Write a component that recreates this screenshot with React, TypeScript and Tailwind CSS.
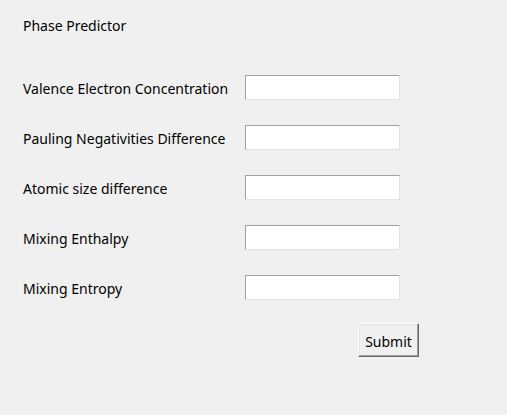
import React from "react";

const labels = [
  "Valence Electron Concentration",
  "Pauling Negativities Difference",
  "Atomic size difference",
  "Mixing Enthalpy",
  "Mixing Entropy",
];

export default function App() {
  return (
    <div
      className="w-[507px] h-[415px] bg-[#f0f0f0] text-[14px] text-black pl-[23px] pt-[16px] flex flex-col"
      style={{ fontFamily: '"Noto Sans", "Open Sans", sans-serif' }}
    >
      <div className="h-[20px] leading-[20px]">Phase Predictor</div>
      <div className="mt-[39px] flex flex-col gap-[25px]">
        {labels.map((l) => (
          <div key={l} className="flex items-start h-[25px]">
            <div className="w-[222px] leading-[20px] mt-[4px] whitespace-nowrap">{l}</div>
            <input
              type="text"
              className="w-[155px] h-[25px] bg-white border-t border-l border-t-[#a0a0a0] border-l-[#a0a0a0] border-r border-b border-r-[#e3e3e3] border-b-[#e3e3e3] outline-none"
            />
          </div>
        ))}
      </div>
      <div className="mt-[23px] flex">
        <button className="ml-[335px] w-[61px] h-[34px] flex items-start justify-center pt-[8px] bg-[#f0f0f0] border border-t-white border-l-white border-r-[#696969] border-b-[#696969] shadow-[inset_-1px_-1px_0_#a0a0a0,inset_1px_1px_0_#e3e3e3] text-[14px] leading-[20px]">
          Submit
        </button>
      </div>
    </div>
  );
}
